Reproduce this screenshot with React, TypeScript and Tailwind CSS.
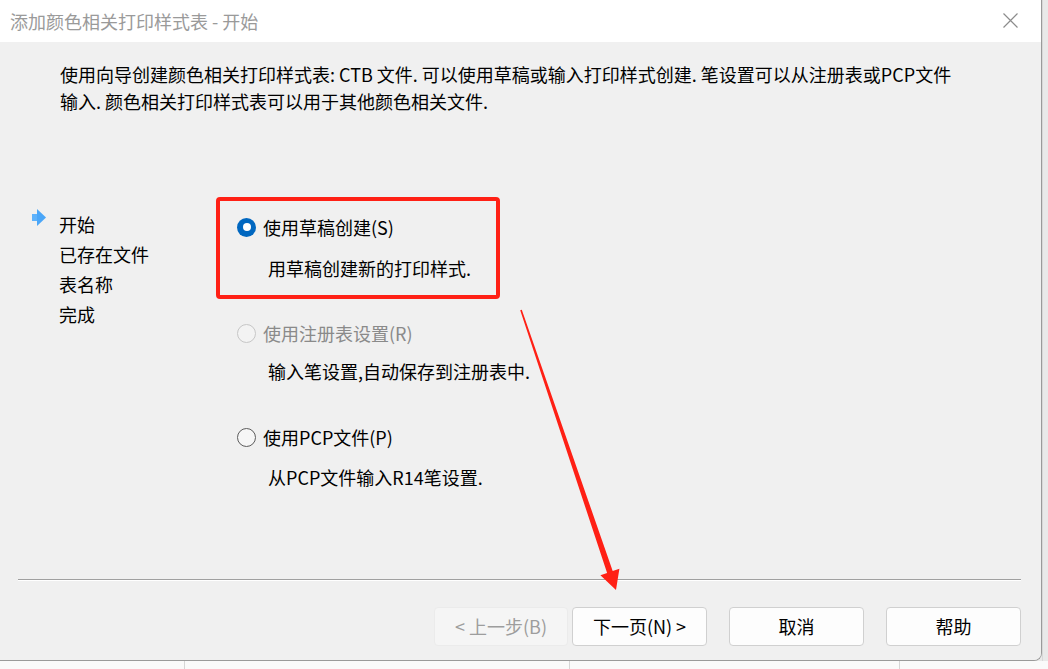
import React from 'react';

const font = { fontFamily: '"Noto Sans CJK SC", "Noto Sans", sans-serif' };

function Radio({ checked, disabled }: { checked?: boolean; disabled?: boolean }) {
  if (checked) {
    return (
      <span className="w-[19px] h-[19px] rounded-full bg-[#0067c0] flex items-center justify-center shrink-0">
        <span className="w-[8px] h-[8px] rounded-full bg-white" />
      </span>
    );
  }
  return (
    <span
      className={
        'w-[19px] h-[19px] rounded-full border shrink-0 ' +
        (disabled ? 'border-[#c6c6c6] bg-[#f3f3f3]' : 'border-[#5c5c5c] bg-[#f6f6f6]')
      }
    />
  );
}

function Option({
  label, desc, checked, disabled, boxed, className, descGap,
}: {
  label: string;
  desc: string;
  checked?: boolean;
  disabled?: boolean;
  boxed?: boolean;
  className?: string;
  descGap: string;
}) {
  return (
    <div
      className={
        'w-[284px] border-4 rounded-[4px] pl-[17px] pt-[14px] pb-[15px] ' +
        (boxed ? 'border-[#ff2015] ' : 'border-transparent ') +
        (className ?? '')
      }
    >
      <div className="flex items-center h-[24px] gap-[7px]">
        <Radio checked={checked} disabled={disabled} />
        <span className={'text-[18px] leading-[24px] whitespace-nowrap ' + (disabled ? 'text-[#8a8a8a]' : 'text-black')}>
          {label}
        </span>
      </div>
      <div className={'pl-[31px] text-[18px] leading-[24px] text-black whitespace-nowrap ' + descGap}>{desc}</div>
    </div>
  );
}

function Button({ children, disabled, className }: { children: React.ReactNode; disabled?: boolean; className?: string }) {
  return (
    <button
      disabled={disabled}
      className={
        'h-[39px] rounded-[4px] border text-[18px] flex items-center justify-center ' +
        (disabled
          ? 'bg-[#f5f5f5] border-[#ebebeb] text-[#9d9d9d] '
          : 'bg-[#fdfdfd] border-[#d0d0d0] text-black ') +
        (className ?? '')
      }
    >
      {children}
    </button>
  );
}

export default function App() {
  const nav = ['开始', '已存在文件', '表名称', '完成'];

  return (
    <div className="w-[1048px] h-[669px] bg-[#e9e9e9] overflow-hidden flex flex-col" style={font}>
      <div className="flex">
        {/* Dialog window */}
        <div className="relative w-[1042px] h-[661px] flex flex-col border-r border-b border-[#9a9a9a] rounded-br-[8px] overflow-hidden">
          {/* Title bar */}
          <div className="h-[42px] bg-white flex items-center justify-between pl-[10px] pr-[23px] shrink-0">
            <span className="text-[18px] text-[#9a9a9a] whitespace-nowrap">添加颜色相关打印样式表 - 开始</span>
            <svg width="15" height="15" viewBox="0 0 15 15" className="mt-[-1px]">
              <path d="M0.5 0.5 L14.5 14.5 M14.5 0.5 L0.5 14.5" stroke="#8c8c8c" strokeWidth="1.2" />
            </svg>
          </div>

          {/* Body */}
          <div className="flex-1 bg-[#f0f0f0] flex flex-col">
            <p className="pt-[19px] pl-[60px] text-[18px] leading-[27px] text-black whitespace-nowrap">
              使用向导创建颜色相关打印样式表: CTB 文件. 可以使用草稿或输入打印样式创建. 笔设置可以从注册表或PCP文件
              <br />
              输入. 颜色相关打印样式表可以用于其他颜色相关文件.
            </p>

            <div className="mt-[82px] flex">
              {/* Steps */}
              <div className="w-[216px] pt-[12px] pl-[32px] shrink-0">
                {nav.map((item, i) => (
                  <div key={item} className="flex h-[30px]">
                    <div className="w-[27px] shrink-0">
                      {i === 0 && (
                        <svg width="14" height="17" viewBox="0 0 14 17" className="mt-[0px]">
                          <rect x="0" y="5" width="6" height="7" fill="#5eb2fb" />
                          <path d="M5 0 L14 8.5 L5 17 Z" fill="#4aa6f8" />
                        </svg>
                      )}
                    </div>
                    <span className="text-[18px] leading-[30px] text-black whitespace-nowrap">{item}</span>
                  </div>
                ))}
              </div>

              {/* Options */}
              <div className="flex flex-col">
                <Option boxed checked label="使用草稿创建(S)" desc="用草稿创建新的打印样式." descGap="mt-[17px]" />
                <Option disabled label="使用注册表设置(R)" desc="输入笔设置,自动保存到注册表中." descGap="mt-[14px]" className="mt-[4px]" />
                <Option label="使用PCP文件(P)" desc="从PCP文件输入R14笔设置." descGap="mt-[16px]" className="mt-[5px]" />
              </div>
            </div>

            <div className="flex-1" />

            {/* Separator */}
            <div className="ml-[18px] mr-[20px] h-[2px] border-t border-[#a0a0a0] bg-white" />

            {/* Buttons */}
            <div className="mt-[26px] mb-[14px] pr-[20px] flex justify-end items-center">
              <Button disabled className="w-[134px]">&lt; 上一步(B)</Button>
              <Button className="w-[135px] ml-[4px]">下一页(N) &gt;</Button>
              <Button className="w-[135px] ml-[22px]">取消</Button>
              <Button className="w-[135px] ml-[22px]">帮助</Button>
            </div>
          </div>

          {/* Red annotation arrow */}
          <svg className="absolute inset-0 pointer-events-none" width="1042" height="661" viewBox="0 0 1042 661">
            <polygon
              points="521.8,309.7 612.7,571 619.4,568.8 616,590 600.4,575.2 607.1,573 520.2,310.3"
              fill="#ff2015"
            />
          </svg>
        </div>
        <div className="flex-1 border-l border-[#d8d8d8]" />
      </div>

      {/* Window behind, bottom strip */}
      <div className="flex-1 bg-[#fafafa] flex overflow-hidden">
        <div className="w-[185px] border-r border-[#d6d6d6]" />
        <div className="w-[385px] border-r border-[#d6d6d6]" />
        <div className="w-[330px] border-r border-[#d6d6d6]" />
        <div className="flex-1" />
      </div>
    </div>
  );
}
